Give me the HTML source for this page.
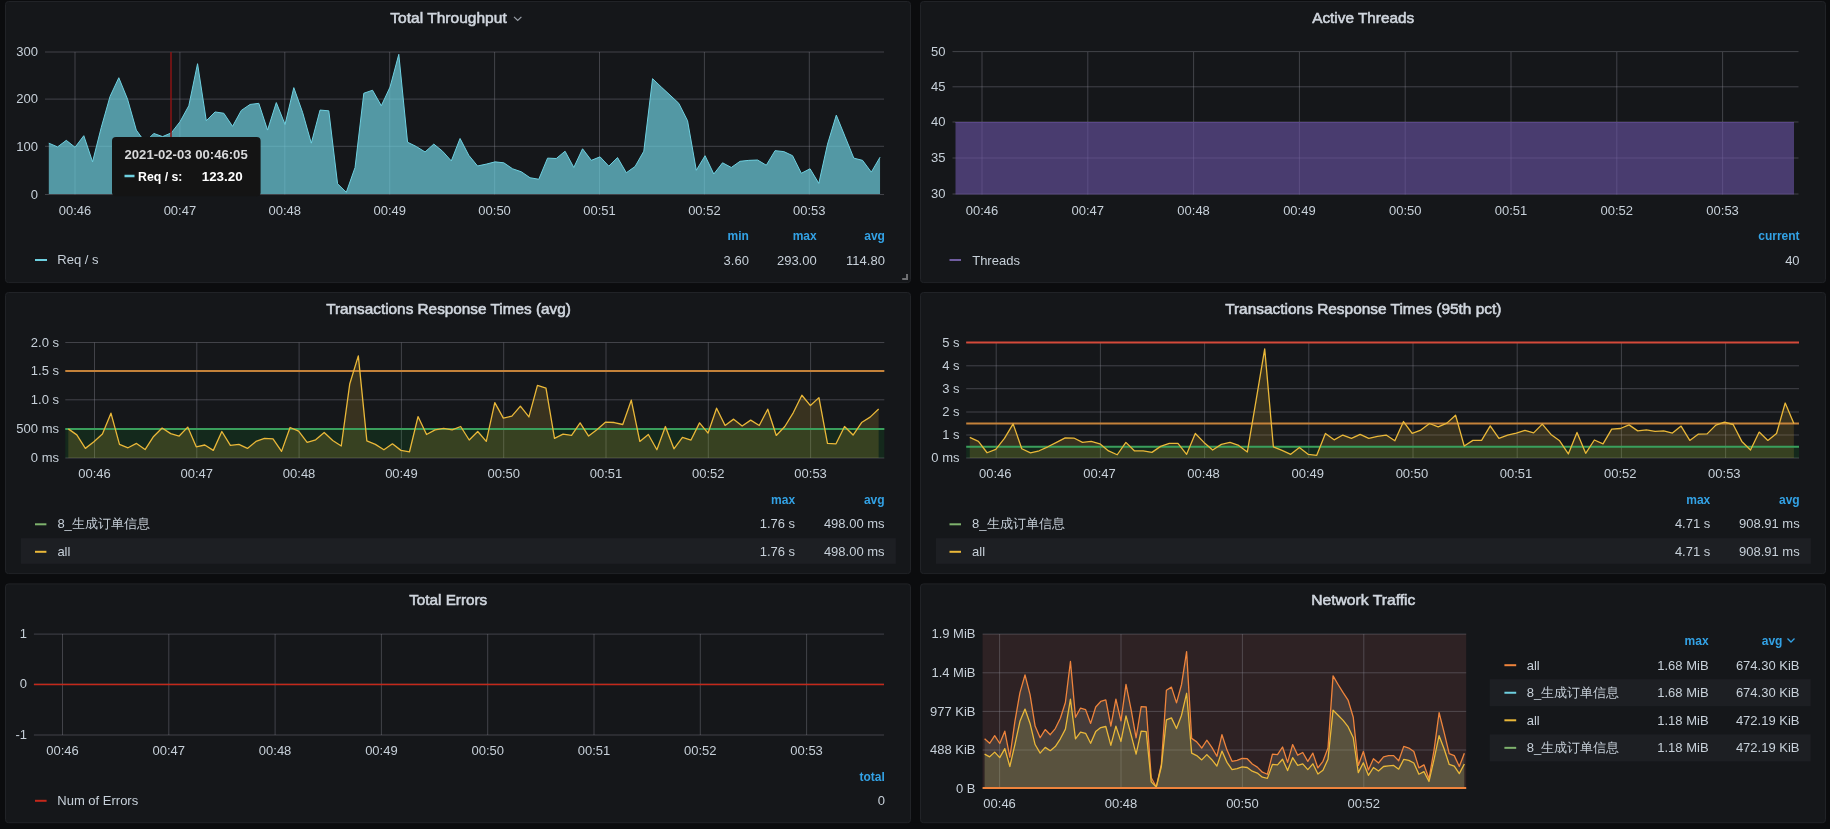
<!DOCTYPE html><html><head><meta charset="utf-8"><style>html,body{margin:0;padding:0;background:#0b0c0e;width:1830px;height:829px;overflow:hidden;position:relative}</style></head><body><svg width="1830" height="829" viewBox="0 0 1830 829" style="position:absolute;left:0;top:0;will-change:transform;font-family:'Liberation Sans',sans-serif">
<rect width="1830" height="829" fill="#0b0c0e"/>
<rect x="5.5" y="1.5" width="905" height="281.1" rx="3" fill="#15171a" stroke="#212327" stroke-width="1"/>
<rect x="920.5" y="1.5" width="905" height="281.1" rx="3" fill="#15171a" stroke="#212327" stroke-width="1"/>
<rect x="5.5" y="292.5" width="905" height="281.1" rx="3" fill="#15171a" stroke="#212327" stroke-width="1"/>
<rect x="920.5" y="292.5" width="905" height="281.1" rx="3" fill="#15171a" stroke="#212327" stroke-width="1"/>
<rect x="5.5" y="583.9" width="905" height="238.80000000000007" rx="3" fill="#15171a" stroke="#212327" stroke-width="1"/>
<rect x="920.5" y="583.9" width="905" height="238.80000000000007" rx="3" fill="#15171a" stroke="#212327" stroke-width="1"/>
<text x="448.5" y="22.8" font-size="14.8" text-anchor="middle" fill="#d0d6de" stroke="#d0d6de" stroke-width="0.55" textLength="116.4" lengthAdjust="spacingAndGlyphs">Total Throughput</text>
<path d="M514,16.8 L517.7,20.5 L521.4,16.8" fill="none" stroke="#9aa0a8" stroke-width="1.2"/>
<text x="1363.2" y="22.8" font-size="14.8" text-anchor="middle" fill="#d0d6de" stroke="#d0d6de" stroke-width="0.55" textLength="102" lengthAdjust="spacingAndGlyphs">Active Threads</text>
<text x="448.5" y="314" font-size="14.8" text-anchor="middle" fill="#d0d6de" stroke="#d0d6de" stroke-width="0.55" textLength="244.6" lengthAdjust="spacingAndGlyphs">Transactions Response Times (avg)</text>
<text x="1363.3" y="314" font-size="14.8" text-anchor="middle" fill="#d0d6de" stroke="#d0d6de" stroke-width="0.55" textLength="276.3" lengthAdjust="spacingAndGlyphs">Transactions Response Times (95th pct)</text>
<text x="448.2" y="604.9" font-size="14.8" text-anchor="middle" fill="#d0d6de" stroke="#d0d6de" stroke-width="0.55" textLength="78.1" lengthAdjust="spacingAndGlyphs">Total Errors</text>
<text x="1363.3" y="604.9" font-size="14.8" text-anchor="middle" fill="#d0d6de" stroke="#d0d6de" stroke-width="0.55" textLength="104.3" lengthAdjust="spacingAndGlyphs">Network Traffic</text>
<line x1="45" y1="52" x2="884" y2="52" stroke="rgba(140,140,150,0.38)" stroke-width="1"/>
<text x="38" y="56.2" font-size="13" text-anchor="end" fill="#c7d0d9" font-weight="normal">300</text>
<line x1="45" y1="99.1" x2="884" y2="99.1" stroke="rgba(140,140,150,0.38)" stroke-width="1"/>
<text x="38" y="103.3" font-size="13" text-anchor="end" fill="#c7d0d9" font-weight="normal">200</text>
<line x1="45" y1="146.3" x2="884" y2="146.3" stroke="rgba(140,140,150,0.38)" stroke-width="1"/>
<text x="38" y="150.5" font-size="13" text-anchor="end" fill="#c7d0d9" font-weight="normal">100</text>
<line x1="45" y1="194.5" x2="884" y2="194.5" stroke="rgba(140,140,150,0.38)" stroke-width="1"/>
<text x="38" y="198.7" font-size="13" text-anchor="end" fill="#c7d0d9" font-weight="normal">0</text>
<line x1="75.0" y1="52" x2="75.0" y2="194.5" stroke="rgba(140,140,150,0.38)" stroke-width="1"/>
<text x="75.0" y="214.6" font-size="13" text-anchor="middle" fill="#c7d0d9" font-weight="normal">00:46</text>
<line x1="179.9" y1="52" x2="179.9" y2="194.5" stroke="rgba(140,140,150,0.38)" stroke-width="1"/>
<text x="179.9" y="214.6" font-size="13" text-anchor="middle" fill="#c7d0d9" font-weight="normal">00:47</text>
<line x1="284.8" y1="52" x2="284.8" y2="194.5" stroke="rgba(140,140,150,0.38)" stroke-width="1"/>
<text x="284.8" y="214.6" font-size="13" text-anchor="middle" fill="#c7d0d9" font-weight="normal">00:48</text>
<line x1="389.70000000000005" y1="52" x2="389.70000000000005" y2="194.5" stroke="rgba(140,140,150,0.38)" stroke-width="1"/>
<text x="389.70000000000005" y="214.6" font-size="13" text-anchor="middle" fill="#c7d0d9" font-weight="normal">00:49</text>
<line x1="494.6" y1="52" x2="494.6" y2="194.5" stroke="rgba(140,140,150,0.38)" stroke-width="1"/>
<text x="494.6" y="214.6" font-size="13" text-anchor="middle" fill="#c7d0d9" font-weight="normal">00:50</text>
<line x1="599.5" y1="52" x2="599.5" y2="194.5" stroke="rgba(140,140,150,0.38)" stroke-width="1"/>
<text x="599.5" y="214.6" font-size="13" text-anchor="middle" fill="#c7d0d9" font-weight="normal">00:51</text>
<line x1="704.4000000000001" y1="52" x2="704.4000000000001" y2="194.5" stroke="rgba(140,140,150,0.38)" stroke-width="1"/>
<text x="704.4000000000001" y="214.6" font-size="13" text-anchor="middle" fill="#c7d0d9" font-weight="normal">00:52</text>
<line x1="809.3000000000001" y1="52" x2="809.3000000000001" y2="194.5" stroke="rgba(140,140,150,0.38)" stroke-width="1"/>
<text x="809.3000000000001" y="214.6" font-size="13" text-anchor="middle" fill="#c7d0d9" font-weight="normal">00:53</text>
<polygon points="48.80,194 48.80,143.17 57.55,146.91 66.30,140.36 75.05,147.28 83.80,135.69 92.55,161.87 101.30,127.27 110.05,96.42 118.80,77.72 127.55,99.23 136.30,130.08 145.05,142.23 153.80,133.44 162.55,136.62 171.30,132.88 180.05,121.66 188.80,105.77 197.55,63.70 206.30,120.73 215.05,111.94 223.80,113.25 232.55,126.34 241.30,110.45 250.05,104.46 258.80,103.34 267.55,130.08 276.30,102.59 285.05,124.47 293.80,87.63 302.55,112.31 311.30,143.17 320.05,110.07 328.80,110.82 337.55,183.74 346.30,192.34 355.05,167.48 363.80,93.24 372.55,90.25 381.30,105.77 390.05,87.07 398.80,54.35 407.55,142.23 416.30,146.53 425.05,151.96 433.80,144.10 442.55,151.21 451.30,160.93 460.05,138.49 468.80,155.32 477.55,165.98 486.30,164.11 495.05,161.87 503.80,162.80 512.55,168.78 521.30,171.78 530.05,177.76 538.80,179.26 547.55,158.13 556.30,158.50 565.05,151.21 573.80,167.48 582.55,148.78 591.30,160.37 600.05,156.82 608.80,166.17 617.55,157.57 626.30,172.71 635.05,166.54 643.80,151.21 652.55,78.66 661.30,87.07 670.05,95.11 678.80,103.34 687.55,120.73 696.30,170.28 705.05,155.70 713.80,174.02 722.55,162.80 731.30,167.48 740.05,161.31 748.80,160.37 757.55,160.00 766.30,165.23 775.05,150.65 783.80,151.58 792.55,155.70 801.30,173.27 810.05,168.78 818.80,183.37 827.55,144.10 836.30,115.12 845.05,136.62 853.80,158.13 862.55,160.37 871.30,172.15 880.05,157.19 880.05,194" fill="#6ed0e0" fill-opacity="0.7"/>
<polyline points="48.80,143.17 57.55,146.91 66.30,140.36 75.05,147.28 83.80,135.69 92.55,161.87 101.30,127.27 110.05,96.42 118.80,77.72 127.55,99.23 136.30,130.08 145.05,142.23 153.80,133.44 162.55,136.62 171.30,132.88 180.05,121.66 188.80,105.77 197.55,63.70 206.30,120.73 215.05,111.94 223.80,113.25 232.55,126.34 241.30,110.45 250.05,104.46 258.80,103.34 267.55,130.08 276.30,102.59 285.05,124.47 293.80,87.63 302.55,112.31 311.30,143.17 320.05,110.07 328.80,110.82 337.55,183.74 346.30,192.34 355.05,167.48 363.80,93.24 372.55,90.25 381.30,105.77 390.05,87.07 398.80,54.35 407.55,142.23 416.30,146.53 425.05,151.96 433.80,144.10 442.55,151.21 451.30,160.93 460.05,138.49 468.80,155.32 477.55,165.98 486.30,164.11 495.05,161.87 503.80,162.80 512.55,168.78 521.30,171.78 530.05,177.76 538.80,179.26 547.55,158.13 556.30,158.50 565.05,151.21 573.80,167.48 582.55,148.78 591.30,160.37 600.05,156.82 608.80,166.17 617.55,157.57 626.30,172.71 635.05,166.54 643.80,151.21 652.55,78.66 661.30,87.07 670.05,95.11 678.80,103.34 687.55,120.73 696.30,170.28 705.05,155.70 713.80,174.02 722.55,162.80 731.30,167.48 740.05,161.31 748.80,160.37 757.55,160.00 766.30,165.23 775.05,150.65 783.80,151.58 792.55,155.70 801.30,173.27 810.05,168.78 818.80,183.37 827.55,144.10 836.30,115.12 845.05,136.62 853.80,158.13 862.55,160.37 871.30,172.15 880.05,157.19" fill="none" stroke="#6ed0e0" stroke-width="1"/>
<line x1="171" y1="52" x2="171" y2="194" stroke="#8a1515" stroke-width="1.5"/>
<line x1="35" y1="260" x2="47" y2="260" stroke="#6ed0e0" stroke-width="2"/>
<text x="57.3" y="264.4" font-size="13" text-anchor="start" fill="#c7d0d9" font-weight="normal">Req / s</text>
<text x="748.9" y="240.1" font-size="12" text-anchor="end" fill="#33a2e5" font-weight="bold">min</text>
<text x="816.7" y="240.1" font-size="12" text-anchor="end" fill="#33a2e5" font-weight="bold">max</text>
<text x="884.9" y="240.1" font-size="12" text-anchor="end" fill="#33a2e5" font-weight="bold">avg</text>
<text x="748.9" y="264.6" font-size="13" text-anchor="end" fill="#c7d0d9" font-weight="normal">3.60</text>
<text x="816.7" y="264.6" font-size="13" text-anchor="end" fill="#c7d0d9" font-weight="normal">293.00</text>
<text x="884.9" y="264.6" font-size="13" text-anchor="end" fill="#c7d0d9" font-weight="normal">114.80</text>
<path d="M902.2,279 H907 V274" fill="none" stroke="#6e6f72" stroke-width="2"/>
<rect x="112" y="137" width="148.6" height="59.3" rx="4" fill="#141414"/>
<text x="124.5" y="159.2" font-size="13" text-anchor="start" fill="#d8d9da" font-weight="bold" textLength="123.2" lengthAdjust="spacingAndGlyphs">2021-02-03 00:46:05</text>
<line x1="124.5" y1="176" x2="134.5" y2="176" stroke="#6ed0e0" stroke-width="2.5"/>
<text x="138" y="181.4" font-size="12.5" text-anchor="start" fill="#ffffff" font-weight="bold" textLength="44.4" lengthAdjust="spacingAndGlyphs">Req / s:</text>
<text x="242.7" y="181.4" font-size="13" text-anchor="end" fill="#ffffff" font-weight="bold" textLength="41" lengthAdjust="spacingAndGlyphs">123.20</text>
<line x1="952.5" y1="51.6" x2="1798.5" y2="51.6" stroke="rgba(140,140,150,0.38)" stroke-width="1"/>
<text x="945.5" y="55.800000000000004" font-size="13" text-anchor="end" fill="#c7d0d9" font-weight="normal">50</text>
<line x1="952.5" y1="86.8" x2="1798.5" y2="86.8" stroke="rgba(140,140,150,0.38)" stroke-width="1"/>
<text x="945.5" y="91.0" font-size="13" text-anchor="end" fill="#c7d0d9" font-weight="normal">45</text>
<line x1="952.5" y1="122" x2="1798.5" y2="122" stroke="rgba(140,140,150,0.38)" stroke-width="1"/>
<text x="945.5" y="126.2" font-size="13" text-anchor="end" fill="#c7d0d9" font-weight="normal">40</text>
<line x1="952.5" y1="158" x2="1798.5" y2="158" stroke="rgba(140,140,150,0.38)" stroke-width="1"/>
<text x="945.5" y="162.2" font-size="13" text-anchor="end" fill="#c7d0d9" font-weight="normal">35</text>
<line x1="952.5" y1="194" x2="1798.5" y2="194" stroke="rgba(140,140,150,0.38)" stroke-width="1"/>
<text x="945.5" y="198.2" font-size="13" text-anchor="end" fill="#c7d0d9" font-weight="normal">30</text>
<line x1="982.0" y1="52" x2="982.0" y2="194.5" stroke="rgba(140,140,150,0.38)" stroke-width="1"/>
<text x="982.0" y="214.6" font-size="13" text-anchor="middle" fill="#c7d0d9" font-weight="normal">00:46</text>
<line x1="1087.8" y1="52" x2="1087.8" y2="194.5" stroke="rgba(140,140,150,0.38)" stroke-width="1"/>
<text x="1087.8" y="214.6" font-size="13" text-anchor="middle" fill="#c7d0d9" font-weight="normal">00:47</text>
<line x1="1193.6" y1="52" x2="1193.6" y2="194.5" stroke="rgba(140,140,150,0.38)" stroke-width="1"/>
<text x="1193.6" y="214.6" font-size="13" text-anchor="middle" fill="#c7d0d9" font-weight="normal">00:48</text>
<line x1="1299.4" y1="52" x2="1299.4" y2="194.5" stroke="rgba(140,140,150,0.38)" stroke-width="1"/>
<text x="1299.4" y="214.6" font-size="13" text-anchor="middle" fill="#c7d0d9" font-weight="normal">00:49</text>
<line x1="1405.2" y1="52" x2="1405.2" y2="194.5" stroke="rgba(140,140,150,0.38)" stroke-width="1"/>
<text x="1405.2" y="214.6" font-size="13" text-anchor="middle" fill="#c7d0d9" font-weight="normal">00:50</text>
<line x1="1511.0" y1="52" x2="1511.0" y2="194.5" stroke="rgba(140,140,150,0.38)" stroke-width="1"/>
<text x="1511.0" y="214.6" font-size="13" text-anchor="middle" fill="#c7d0d9" font-weight="normal">00:51</text>
<line x1="1616.8" y1="52" x2="1616.8" y2="194.5" stroke="rgba(140,140,150,0.38)" stroke-width="1"/>
<text x="1616.8" y="214.6" font-size="13" text-anchor="middle" fill="#c7d0d9" font-weight="normal">00:52</text>
<line x1="1722.6" y1="52" x2="1722.6" y2="194.5" stroke="rgba(140,140,150,0.38)" stroke-width="1"/>
<text x="1722.6" y="214.6" font-size="13" text-anchor="middle" fill="#c7d0d9" font-weight="normal">00:53</text>
<rect x="955.5" y="122" width="838.5" height="72.5" fill="#6c55a8" fill-opacity="0.6"/>
<line x1="955.5" y1="122.5" x2="1794" y2="122.5" stroke="#5a4888" stroke-width="1"/>
<line x1="949.5" y1="260" x2="961" y2="260" stroke="#705da0" stroke-width="2"/>
<text x="972.2" y="264.8" font-size="13" text-anchor="start" fill="#c7d0d9" font-weight="normal">Threads</text>
<text x="1799.6" y="240.1" font-size="12" text-anchor="end" fill="#33a2e5" font-weight="bold">current</text>
<text x="1799.6" y="264.6" font-size="13" text-anchor="end" fill="#c7d0d9" font-weight="normal">40</text>
<line x1="65.3" y1="342.5" x2="884.3" y2="342.5" stroke="rgba(140,140,150,0.38)" stroke-width="1"/>
<text x="59" y="346.7" font-size="13" text-anchor="end" fill="#c7d0d9" font-weight="normal">2.0 s</text>
<line x1="65.3" y1="370.8" x2="884.3" y2="370.8" stroke="rgba(140,140,150,0.38)" stroke-width="1"/>
<text x="59" y="375.0" font-size="13" text-anchor="end" fill="#c7d0d9" font-weight="normal">1.5 s</text>
<line x1="65.3" y1="399.8" x2="884.3" y2="399.8" stroke="rgba(140,140,150,0.38)" stroke-width="1"/>
<text x="59" y="404.0" font-size="13" text-anchor="end" fill="#c7d0d9" font-weight="normal">1.0 s</text>
<line x1="65.3" y1="428.9" x2="884.3" y2="428.9" stroke="rgba(140,140,150,0.38)" stroke-width="1"/>
<text x="59" y="433.09999999999997" font-size="13" text-anchor="end" fill="#c7d0d9" font-weight="normal">500 ms</text>
<line x1="65.3" y1="458" x2="884.3" y2="458" stroke="rgba(140,140,150,0.38)" stroke-width="1"/>
<text x="59" y="462.2" font-size="13" text-anchor="end" fill="#c7d0d9" font-weight="normal">0 ms</text>
<line x1="94.5" y1="342.5" x2="94.5" y2="458" stroke="rgba(140,140,150,0.38)" stroke-width="1"/>
<text x="94.5" y="477.7" font-size="13" text-anchor="middle" fill="#c7d0d9" font-weight="normal">00:46</text>
<line x1="196.8" y1="342.5" x2="196.8" y2="458" stroke="rgba(140,140,150,0.38)" stroke-width="1"/>
<text x="196.8" y="477.7" font-size="13" text-anchor="middle" fill="#c7d0d9" font-weight="normal">00:47</text>
<line x1="299.1" y1="342.5" x2="299.1" y2="458" stroke="rgba(140,140,150,0.38)" stroke-width="1"/>
<text x="299.1" y="477.7" font-size="13" text-anchor="middle" fill="#c7d0d9" font-weight="normal">00:48</text>
<line x1="401.4" y1="342.5" x2="401.4" y2="458" stroke="rgba(140,140,150,0.38)" stroke-width="1"/>
<text x="401.4" y="477.7" font-size="13" text-anchor="middle" fill="#c7d0d9" font-weight="normal">00:49</text>
<line x1="503.7" y1="342.5" x2="503.7" y2="458" stroke="rgba(140,140,150,0.38)" stroke-width="1"/>
<text x="503.7" y="477.7" font-size="13" text-anchor="middle" fill="#c7d0d9" font-weight="normal">00:50</text>
<line x1="606.0" y1="342.5" x2="606.0" y2="458" stroke="rgba(140,140,150,0.38)" stroke-width="1"/>
<text x="606.0" y="477.7" font-size="13" text-anchor="middle" fill="#c7d0d9" font-weight="normal">00:51</text>
<line x1="708.3" y1="342.5" x2="708.3" y2="458" stroke="rgba(140,140,150,0.38)" stroke-width="1"/>
<text x="708.3" y="477.7" font-size="13" text-anchor="middle" fill="#c7d0d9" font-weight="normal">00:52</text>
<line x1="810.6" y1="342.5" x2="810.6" y2="458" stroke="rgba(140,140,150,0.38)" stroke-width="1"/>
<text x="810.6" y="477.7" font-size="13" text-anchor="middle" fill="#c7d0d9" font-weight="normal">00:53</text>
<rect x="65.3" y="429" width="819.0" height="29" fill="#0bed32" fill-opacity="0.09"/>
<polygon points="68.30,458 68.30,428.88 76.83,434.85 85.36,448.38 93.89,441.82 102.42,434.05 110.95,413.16 119.48,444.40 128.01,447.79 136.54,443.41 145.07,449.58 153.60,436.44 162.13,428.08 170.66,433.66 179.19,436.04 187.72,427.09 196.25,446.79 204.78,445.00 213.31,450.37 221.84,431.47 230.37,445.40 238.90,444.40 247.43,448.38 255.96,441.42 264.49,438.43 273.02,438.83 281.55,451.37 290.08,427.49 298.61,431.07 307.14,442.41 315.67,439.83 324.20,432.46 332.73,440.42 341.26,446.00 349.79,383.71 358.32,355.85 366.85,440.82 375.38,444.40 383.91,449.78 392.44,443.81 400.97,450.37 409.50,451.77 418.03,416.54 426.56,434.45 435.09,429.88 443.62,428.48 452.15,429.88 460.68,426.49 469.21,440.02 477.74,431.47 486.27,441.42 494.80,402.61 503.33,418.13 511.86,416.14 520.39,406.19 528.92,416.94 537.45,385.30 545.98,388.08 554.51,438.43 563.04,434.05 571.57,435.45 580.10,422.91 588.63,436.04 597.16,429.48 605.69,422.11 614.22,422.51 622.75,424.50 631.28,400.22 639.81,441.42 648.34,434.45 656.87,449.78 665.40,426.49 673.93,448.78 682.46,437.44 690.99,440.02 699.52,422.91 708.05,433.06 716.58,408.18 725.11,425.50 733.64,419.13 742.17,426.09 750.70,420.12 759.23,425.50 767.76,409.18 776.29,435.45 784.82,426.49 793.35,412.56 801.88,395.25 810.41,405.60 818.94,397.64 827.47,443.41 836.00,443.81 844.53,426.49 853.06,435.05 861.59,422.51 870.12,417.14 878.65,408.98 878.65,458" fill="#eab839" fill-opacity="0.17"/>
<line x1="65.3" y1="429" x2="884.3" y2="429" stroke="#3a9f5c" stroke-width="2"/>
<line x1="65.3" y1="371" x2="884.3" y2="371" stroke="#c4823a" stroke-width="2"/>
<polyline points="68.30,428.88 76.83,434.85 85.36,448.38 93.89,441.82 102.42,434.05 110.95,413.16 119.48,444.40 128.01,447.79 136.54,443.41 145.07,449.58 153.60,436.44 162.13,428.08 170.66,433.66 179.19,436.04 187.72,427.09 196.25,446.79 204.78,445.00 213.31,450.37 221.84,431.47 230.37,445.40 238.90,444.40 247.43,448.38 255.96,441.42 264.49,438.43 273.02,438.83 281.55,451.37 290.08,427.49 298.61,431.07 307.14,442.41 315.67,439.83 324.20,432.46 332.73,440.42 341.26,446.00 349.79,383.71 358.32,355.85 366.85,440.82 375.38,444.40 383.91,449.78 392.44,443.81 400.97,450.37 409.50,451.77 418.03,416.54 426.56,434.45 435.09,429.88 443.62,428.48 452.15,429.88 460.68,426.49 469.21,440.02 477.74,431.47 486.27,441.42 494.80,402.61 503.33,418.13 511.86,416.14 520.39,406.19 528.92,416.94 537.45,385.30 545.98,388.08 554.51,438.43 563.04,434.05 571.57,435.45 580.10,422.91 588.63,436.04 597.16,429.48 605.69,422.11 614.22,422.51 622.75,424.50 631.28,400.22 639.81,441.42 648.34,434.45 656.87,449.78 665.40,426.49 673.93,448.78 682.46,437.44 690.99,440.02 699.52,422.91 708.05,433.06 716.58,408.18 725.11,425.50 733.64,419.13 742.17,426.09 750.70,420.12 759.23,425.50 767.76,409.18 776.29,435.45 784.82,426.49 793.35,412.56 801.88,395.25 810.41,405.60 818.94,397.64 827.47,443.41 836.00,443.81 844.53,426.49 853.06,435.05 861.59,422.51 870.12,417.14 878.65,408.98" fill="none" stroke="#eab839" stroke-width="1.3" stroke-linejoin="round"/>
<text x="795.1" y="503.7" font-size="12" text-anchor="end" fill="#33a2e5" font-weight="bold">max</text>
<text x="884.6" y="503.7" font-size="12" text-anchor="end" fill="#33a2e5" font-weight="bold">avg</text>
<rect x="20.8" y="538.2" width="875" height="25.6" fill="#1d1f23"/>
<line x1="35" y1="524.3" x2="46.4" y2="524.3" stroke="#7eb26d" stroke-width="2"/>
<text x="57.4" y="528.2" font-size="13" text-anchor="start" fill="#c7d0d9" font-weight="normal">8_生成订单信息</text>
<text x="795.1" y="528.4" font-size="13" text-anchor="end" fill="#c7d0d9" font-weight="normal">1.76 s</text>
<text x="884.6" y="528.4" font-size="13" text-anchor="end" fill="#c7d0d9" font-weight="normal">498.00 ms</text>
<line x1="35" y1="551.8" x2="46.4" y2="551.8" stroke="#eab839" stroke-width="2"/>
<text x="57.4" y="555.8" font-size="13" text-anchor="start" fill="#c7d0d9" font-weight="normal">all</text>
<text x="795.1" y="555.7" font-size="13" text-anchor="end" fill="#c7d0d9" font-weight="normal">1.76 s</text>
<text x="884.6" y="555.7" font-size="13" text-anchor="end" fill="#c7d0d9" font-weight="normal">498.00 ms</text>
<line x1="966.2" y1="342.5" x2="1799" y2="342.5" stroke="rgba(140,140,150,0.38)" stroke-width="1"/>
<text x="959.5" y="346.7" font-size="13" text-anchor="end" fill="#c7d0d9" font-weight="normal">5 s</text>
<line x1="966.2" y1="365.8" x2="1799" y2="365.8" stroke="rgba(140,140,150,0.38)" stroke-width="1"/>
<text x="959.5" y="370.0" font-size="13" text-anchor="end" fill="#c7d0d9" font-weight="normal">4 s</text>
<line x1="966.2" y1="388.7" x2="1799" y2="388.7" stroke="rgba(140,140,150,0.38)" stroke-width="1"/>
<text x="959.5" y="392.9" font-size="13" text-anchor="end" fill="#c7d0d9" font-weight="normal">3 s</text>
<line x1="966.2" y1="412" x2="1799" y2="412" stroke="rgba(140,140,150,0.38)" stroke-width="1"/>
<text x="959.5" y="416.2" font-size="13" text-anchor="end" fill="#c7d0d9" font-weight="normal">2 s</text>
<line x1="966.2" y1="435" x2="1799" y2="435" stroke="rgba(140,140,150,0.38)" stroke-width="1"/>
<text x="959.5" y="439.2" font-size="13" text-anchor="end" fill="#c7d0d9" font-weight="normal">1 s</text>
<line x1="966.2" y1="458" x2="1799" y2="458" stroke="rgba(140,140,150,0.38)" stroke-width="1"/>
<text x="959.5" y="462.2" font-size="13" text-anchor="end" fill="#c7d0d9" font-weight="normal">0 ms</text>
<line x1="996.2" y1="342.5" x2="996.2" y2="458" stroke="rgba(140,140,150,0.38)" stroke-width="1"/>
<text x="995.3" y="477.7" font-size="13" text-anchor="middle" fill="#c7d0d9" font-weight="normal">00:46</text>
<line x1="1100.4" y1="342.5" x2="1100.4" y2="458" stroke="rgba(140,140,150,0.38)" stroke-width="1"/>
<text x="1099.45" y="477.7" font-size="13" text-anchor="middle" fill="#c7d0d9" font-weight="normal">00:47</text>
<line x1="1204.6000000000001" y1="342.5" x2="1204.6000000000001" y2="458" stroke="rgba(140,140,150,0.38)" stroke-width="1"/>
<text x="1203.6" y="477.7" font-size="13" text-anchor="middle" fill="#c7d0d9" font-weight="normal">00:48</text>
<line x1="1308.8000000000002" y1="342.5" x2="1308.8000000000002" y2="458" stroke="rgba(140,140,150,0.38)" stroke-width="1"/>
<text x="1307.75" y="477.7" font-size="13" text-anchor="middle" fill="#c7d0d9" font-weight="normal">00:49</text>
<line x1="1413.0" y1="342.5" x2="1413.0" y2="458" stroke="rgba(140,140,150,0.38)" stroke-width="1"/>
<text x="1411.9" y="477.7" font-size="13" text-anchor="middle" fill="#c7d0d9" font-weight="normal">00:50</text>
<line x1="1517.2" y1="342.5" x2="1517.2" y2="458" stroke="rgba(140,140,150,0.38)" stroke-width="1"/>
<text x="1516.05" y="477.7" font-size="13" text-anchor="middle" fill="#c7d0d9" font-weight="normal">00:51</text>
<line x1="1621.4" y1="342.5" x2="1621.4" y2="458" stroke="rgba(140,140,150,0.38)" stroke-width="1"/>
<text x="1620.2" y="477.7" font-size="13" text-anchor="middle" fill="#c7d0d9" font-weight="normal">00:52</text>
<line x1="1725.6" y1="342.5" x2="1725.6" y2="458" stroke="rgba(140,140,150,0.38)" stroke-width="1"/>
<text x="1724.35" y="477.7" font-size="13" text-anchor="middle" fill="#c7d0d9" font-weight="normal">00:53</text>
<rect x="966.2" y="446.8" width="832.8" height="11.2" fill="#0bed32" fill-opacity="0.09"/>
<polygon points="969.75,458 969.75,437.44 978.42,441.42 987.10,452.76 995.77,449.38 1004.45,438.43 1013.12,423.91 1021.80,448.78 1030.47,452.96 1039.15,450.77 1047.83,446.79 1056.50,442.41 1065.17,437.84 1073.85,438.03 1082.53,442.41 1091.20,441.42 1099.88,443.81 1108.55,450.97 1117.22,454.75 1125.90,442.41 1134.58,450.97 1143.25,450.97 1151.92,452.36 1160.60,446.39 1169.28,443.41 1177.95,443.41 1186.62,454.35 1195.30,433.46 1203.97,442.41 1212.65,449.98 1221.33,444.40 1230.00,442.41 1238.67,445.40 1247.35,451.97 1256.03,400.62 1264.70,348.88 1273.38,446.79 1282.05,450.37 1290.72,454.35 1299.40,447.39 1308.08,454.35 1316.75,455.35 1325.42,433.46 1334.10,439.83 1342.78,435.05 1351.45,438.43 1360.12,434.45 1368.80,438.43 1377.47,436.44 1386.15,435.05 1394.83,440.82 1403.50,421.52 1412.17,433.46 1420.85,430.07 1429.53,423.51 1438.20,426.89 1446.88,423.11 1455.55,415.15 1464.22,446.00 1472.90,440.42 1481.58,440.42 1490.25,425.90 1498.93,438.43 1507.60,435.05 1516.28,433.06 1524.95,430.47 1533.62,432.86 1542.30,424.10 1550.97,434.45 1559.65,440.82 1568.33,453.96 1577.00,432.46 1585.68,453.36 1594.35,440.02 1603.03,443.81 1611.70,429.08 1620.38,428.48 1629.05,424.90 1637.72,430.87 1646.40,429.88 1655.08,431.47 1663.75,430.87 1672.43,433.06 1681.10,426.09 1689.78,440.42 1698.45,434.05 1707.12,433.86 1715.80,425.10 1724.47,422.11 1733.15,424.50 1741.83,441.42 1750.50,449.98 1759.18,432.06 1767.85,440.42 1776.53,433.46 1785.20,403.01 1793.88,423.51 1793.88,458" fill="#eab839" fill-opacity="0.17"/>
<line x1="966.2" y1="446.8" x2="1799" y2="446.8" stroke="#3a9f5c" stroke-width="2"/>
<line x1="966.2" y1="423.5" x2="1799" y2="423.5" stroke="#c4823a" stroke-width="2"/>
<line x1="966.2" y1="342.5" x2="1799" y2="342.5" stroke="#d44a3a" stroke-width="2"/>
<polyline points="969.75,437.44 978.42,441.42 987.10,452.76 995.77,449.38 1004.45,438.43 1013.12,423.91 1021.80,448.78 1030.47,452.96 1039.15,450.77 1047.83,446.79 1056.50,442.41 1065.17,437.84 1073.85,438.03 1082.53,442.41 1091.20,441.42 1099.88,443.81 1108.55,450.97 1117.22,454.75 1125.90,442.41 1134.58,450.97 1143.25,450.97 1151.92,452.36 1160.60,446.39 1169.28,443.41 1177.95,443.41 1186.62,454.35 1195.30,433.46 1203.97,442.41 1212.65,449.98 1221.33,444.40 1230.00,442.41 1238.67,445.40 1247.35,451.97 1256.03,400.62 1264.70,348.88 1273.38,446.79 1282.05,450.37 1290.72,454.35 1299.40,447.39 1308.08,454.35 1316.75,455.35 1325.42,433.46 1334.10,439.83 1342.78,435.05 1351.45,438.43 1360.12,434.45 1368.80,438.43 1377.47,436.44 1386.15,435.05 1394.83,440.82 1403.50,421.52 1412.17,433.46 1420.85,430.07 1429.53,423.51 1438.20,426.89 1446.88,423.11 1455.55,415.15 1464.22,446.00 1472.90,440.42 1481.58,440.42 1490.25,425.90 1498.93,438.43 1507.60,435.05 1516.28,433.06 1524.95,430.47 1533.62,432.86 1542.30,424.10 1550.97,434.45 1559.65,440.82 1568.33,453.96 1577.00,432.46 1585.68,453.36 1594.35,440.02 1603.03,443.81 1611.70,429.08 1620.38,428.48 1629.05,424.90 1637.72,430.87 1646.40,429.88 1655.08,431.47 1663.75,430.87 1672.43,433.06 1681.10,426.09 1689.78,440.42 1698.45,434.05 1707.12,433.86 1715.80,425.10 1724.47,422.11 1733.15,424.50 1741.83,441.42 1750.50,449.98 1759.18,432.06 1767.85,440.42 1776.53,433.46 1785.20,403.01 1793.88,423.51" fill="none" stroke="#eab839" stroke-width="1.3" stroke-linejoin="round"/>
<text x="1710.3" y="503.7" font-size="12" text-anchor="end" fill="#33a2e5" font-weight="bold">max</text>
<text x="1799.7" y="503.7" font-size="12" text-anchor="end" fill="#33a2e5" font-weight="bold">avg</text>
<rect x="935.9" y="538.2" width="875" height="25.6" fill="#1d1f23"/>
<line x1="949.5" y1="524.3" x2="961" y2="524.3" stroke="#7eb26d" stroke-width="2"/>
<text x="972.1" y="528.2" font-size="13" text-anchor="start" fill="#c7d0d9" font-weight="normal">8_生成订单信息</text>
<text x="1710.3" y="528.4" font-size="13" text-anchor="end" fill="#c7d0d9" font-weight="normal">4.71 s</text>
<text x="1799.7" y="528.4" font-size="13" text-anchor="end" fill="#c7d0d9" font-weight="normal">908.91 ms</text>
<line x1="949.5" y1="551.8" x2="961" y2="551.8" stroke="#eab839" stroke-width="2"/>
<text x="972.1" y="555.8" font-size="13" text-anchor="start" fill="#c7d0d9" font-weight="normal">all</text>
<text x="1710.3" y="555.7" font-size="13" text-anchor="end" fill="#c7d0d9" font-weight="normal">4.71 s</text>
<text x="1799.7" y="555.7" font-size="13" text-anchor="end" fill="#c7d0d9" font-weight="normal">908.91 ms</text>
<line x1="33.9" y1="634.1" x2="884" y2="634.1" stroke="rgba(140,140,150,0.38)" stroke-width="1"/>
<text x="27" y="638.3000000000001" font-size="13" text-anchor="end" fill="#c7d0d9" font-weight="normal">1</text>
<line x1="33.9" y1="684.2" x2="884" y2="684.2" stroke="rgba(140,140,150,0.38)" stroke-width="1"/>
<text x="27" y="688.4000000000001" font-size="13" text-anchor="end" fill="#c7d0d9" font-weight="normal">0</text>
<line x1="33.9" y1="735" x2="884" y2="735" stroke="rgba(140,140,150,0.38)" stroke-width="1"/>
<text x="27" y="739.2" font-size="13" text-anchor="end" fill="#c7d0d9" font-weight="normal">-1</text>
<line x1="62.5" y1="634" x2="62.5" y2="735" stroke="rgba(140,140,150,0.38)" stroke-width="1"/>
<text x="62.5" y="754.9" font-size="13" text-anchor="middle" fill="#c7d0d9" font-weight="normal">00:46</text>
<line x1="168.8" y1="634" x2="168.8" y2="735" stroke="rgba(140,140,150,0.38)" stroke-width="1"/>
<text x="168.8" y="754.9" font-size="13" text-anchor="middle" fill="#c7d0d9" font-weight="normal">00:47</text>
<line x1="275.1" y1="634" x2="275.1" y2="735" stroke="rgba(140,140,150,0.38)" stroke-width="1"/>
<text x="275.1" y="754.9" font-size="13" text-anchor="middle" fill="#c7d0d9" font-weight="normal">00:48</text>
<line x1="381.4" y1="634" x2="381.4" y2="735" stroke="rgba(140,140,150,0.38)" stroke-width="1"/>
<text x="381.4" y="754.9" font-size="13" text-anchor="middle" fill="#c7d0d9" font-weight="normal">00:49</text>
<line x1="487.7" y1="634" x2="487.7" y2="735" stroke="rgba(140,140,150,0.38)" stroke-width="1"/>
<text x="487.7" y="754.9" font-size="13" text-anchor="middle" fill="#c7d0d9" font-weight="normal">00:50</text>
<line x1="594.0" y1="634" x2="594.0" y2="735" stroke="rgba(140,140,150,0.38)" stroke-width="1"/>
<text x="594.0" y="754.9" font-size="13" text-anchor="middle" fill="#c7d0d9" font-weight="normal">00:51</text>
<line x1="700.3" y1="634" x2="700.3" y2="735" stroke="rgba(140,140,150,0.38)" stroke-width="1"/>
<text x="700.3" y="754.9" font-size="13" text-anchor="middle" fill="#c7d0d9" font-weight="normal">00:52</text>
<line x1="806.6" y1="634" x2="806.6" y2="735" stroke="rgba(140,140,150,0.38)" stroke-width="1"/>
<text x="806.6" y="754.9" font-size="13" text-anchor="middle" fill="#c7d0d9" font-weight="normal">00:53</text>
<line x1="33.9" y1="684.5" x2="884" y2="684.5" stroke="#c4281b" stroke-width="1.5"/>
<line x1="35" y1="800.8" x2="46.6" y2="800.8" stroke="#c4281b" stroke-width="2"/>
<text x="57.3" y="805" font-size="13" text-anchor="start" fill="#c7d0d9" font-weight="normal">Num of Errors</text>
<text x="884.9" y="780.5" font-size="12" text-anchor="end" fill="#33a2e5" font-weight="bold">total</text>
<text x="884.9" y="804.9" font-size="13" text-anchor="end" fill="#c7d0d9" font-weight="normal">0</text>
<rect x="982.6" y="634" width="483.6" height="154.4" fill="#ea7070" fill-opacity="0.12"/>
<line x1="982.6" y1="634.1" x2="1466.2" y2="634.1" stroke="rgba(140,140,150,0.38)" stroke-width="1"/>
<text x="975.5" y="638.3000000000001" font-size="13" text-anchor="end" fill="#c7d0d9" font-weight="normal">1.9 MiB</text>
<line x1="982.6" y1="672.8" x2="1466.2" y2="672.8" stroke="rgba(140,140,150,0.38)" stroke-width="1"/>
<text x="975.5" y="677.0" font-size="13" text-anchor="end" fill="#c7d0d9" font-weight="normal">1.4 MiB</text>
<line x1="982.6" y1="711.4" x2="1466.2" y2="711.4" stroke="rgba(140,140,150,0.38)" stroke-width="1"/>
<text x="975.5" y="715.6" font-size="13" text-anchor="end" fill="#c7d0d9" font-weight="normal">977 KiB</text>
<line x1="982.6" y1="750" x2="1466.2" y2="750" stroke="rgba(140,140,150,0.38)" stroke-width="1"/>
<text x="975.5" y="754.2" font-size="13" text-anchor="end" fill="#c7d0d9" font-weight="normal">488 KiB</text>
<line x1="982.6" y1="788.4" x2="1466.2" y2="788.4" stroke="rgba(140,140,150,0.38)" stroke-width="1"/>
<text x="975.5" y="792.6" font-size="13" text-anchor="end" fill="#c7d0d9" font-weight="normal">0 B</text>
<line x1="999.6" y1="634" x2="999.6" y2="788" stroke="rgba(140,140,150,0.38)" stroke-width="1"/>
<text x="999.6" y="808.4" font-size="13" text-anchor="middle" fill="#c7d0d9" font-weight="normal">00:46</text>
<line x1="1121.0" y1="634" x2="1121.0" y2="788" stroke="rgba(140,140,150,0.38)" stroke-width="1"/>
<text x="1121.0" y="808.4" font-size="13" text-anchor="middle" fill="#c7d0d9" font-weight="normal">00:48</text>
<line x1="1242.4" y1="634" x2="1242.4" y2="788" stroke="rgba(140,140,150,0.38)" stroke-width="1"/>
<text x="1242.4" y="808.4" font-size="13" text-anchor="middle" fill="#c7d0d9" font-weight="normal">00:50</text>
<line x1="1363.8000000000002" y1="634" x2="1363.8000000000002" y2="788" stroke="rgba(140,140,150,0.38)" stroke-width="1"/>
<text x="1363.8000000000002" y="808.4" font-size="13" text-anchor="middle" fill="#c7d0d9" font-weight="normal">00:52</text>
<polygon points="984.60,788 984.60,738.80 989.65,743.31 994.70,735.72 999.75,743.52 1004.80,731.21 1009.85,757.25 1014.90,721.37 1019.95,692.66 1025.00,674.83 1030.05,694.71 1035.10,726.09 1040.15,737.77 1045.20,729.57 1050.25,734.70 1055.30,728.55 1060.35,718.30 1065.40,702.51 1070.45,661.50 1075.50,717.27 1080.55,708.04 1085.60,709.68 1090.65,723.42 1095.70,707.02 1100.75,701.48 1105.80,699.84 1110.85,726.09 1115.90,699.23 1120.95,720.96 1126.00,684.46 1131.05,709.48 1136.10,737.77 1141.15,706.61 1146.20,707.02 1151.25,777.76 1156.30,786.98 1161.35,764.43 1166.40,690.20 1171.45,687.13 1176.50,702.92 1181.55,684.46 1186.60,651.66 1191.65,738.39 1196.70,741.88 1201.75,748.03 1206.80,740.23 1211.85,747.41 1216.90,756.23 1221.95,734.70 1227.00,750.08 1232.05,761.35 1237.10,760.33 1242.15,758.28 1247.20,758.69 1252.25,764.02 1257.30,767.10 1262.35,772.22 1267.40,774.27 1272.45,754.18 1277.50,754.59 1282.55,747.00 1287.60,762.38 1292.65,744.54 1297.70,755.20 1302.75,752.54 1307.80,761.35 1312.85,753.15 1317.90,767.92 1322.95,761.35 1328.00,748.03 1333.05,675.85 1338.10,684.46 1343.15,692.66 1348.20,700.46 1353.25,717.27 1358.30,765.46 1363.35,751.51 1368.40,769.97 1373.45,758.69 1378.50,762.99 1383.55,756.84 1388.60,755.61 1393.65,755.61 1398.70,760.74 1403.75,746.39 1408.80,748.03 1413.85,751.51 1418.90,767.92 1423.95,764.84 1429.00,778.78 1434.05,750.08 1439.10,712.76 1444.15,732.65 1449.20,753.56 1454.25,755.61 1459.30,766.48 1464.35,753.15 1464.35,788" fill="#ef843c" fill-opacity="0.1"/>
<polygon points="984.60,788 984.60,738.80 989.65,743.31 994.70,735.72 999.75,743.52 1004.80,731.21 1009.85,757.25 1014.90,721.37 1019.95,692.66 1025.00,674.83 1030.05,694.71 1035.10,726.09 1040.15,737.77 1045.20,729.57 1050.25,734.70 1055.30,728.55 1060.35,718.30 1065.40,702.51 1070.45,661.50 1075.50,717.27 1080.55,708.04 1085.60,709.68 1090.65,723.42 1095.70,707.02 1100.75,701.48 1105.80,699.84 1110.85,726.09 1115.90,699.23 1120.95,720.96 1126.00,684.46 1131.05,709.48 1136.10,737.77 1141.15,706.61 1146.20,707.02 1151.25,777.76 1156.30,786.98 1161.35,764.43 1166.40,690.20 1171.45,687.13 1176.50,702.92 1181.55,684.46 1186.60,651.66 1191.65,738.39 1196.70,741.88 1201.75,748.03 1206.80,740.23 1211.85,747.41 1216.90,756.23 1221.95,734.70 1227.00,750.08 1232.05,761.35 1237.10,760.33 1242.15,758.28 1247.20,758.69 1252.25,764.02 1257.30,767.10 1262.35,772.22 1267.40,774.27 1272.45,754.18 1277.50,754.59 1282.55,747.00 1287.60,762.38 1292.65,744.54 1297.70,755.20 1302.75,752.54 1307.80,761.35 1312.85,753.15 1317.90,767.92 1322.95,761.35 1328.00,748.03 1333.05,675.85 1338.10,684.46 1343.15,692.66 1348.20,700.46 1353.25,717.27 1358.30,765.46 1363.35,751.51 1368.40,769.97 1373.45,758.69 1378.50,762.99 1383.55,756.84 1388.60,755.61 1393.65,755.61 1398.70,760.74 1403.75,746.39 1408.80,748.03 1413.85,751.51 1418.90,767.92 1423.95,764.84 1429.00,778.78 1434.05,750.08 1439.10,712.76 1444.15,732.65 1449.20,753.56 1454.25,755.61 1459.30,766.48 1464.35,753.15 1464.35,788" fill="#6ed0e0" fill-opacity="0.1"/>
<polygon points="984.60,788 984.60,754.18 989.65,756.84 994.70,752.13 999.75,757.66 1004.80,748.64 1009.85,766.48 1014.90,744.54 1019.95,721.37 1025.00,709.07 1030.05,723.42 1035.10,744.54 1040.15,753.15 1045.20,747.41 1050.25,750.69 1055.30,746.59 1060.35,738.80 1065.40,729.16 1070.45,699.23 1075.50,738.80 1080.55,732.03 1085.60,733.26 1090.65,743.31 1095.70,731.62 1100.75,727.52 1105.80,726.50 1110.85,745.36 1115.90,726.09 1120.95,741.47 1126.00,715.83 1131.05,734.70 1136.10,754.18 1141.15,731.21 1146.20,731.62 1151.25,781.86 1156.30,786.98 1161.35,766.48 1166.40,719.94 1171.45,717.88 1176.50,728.55 1181.55,715.22 1186.60,693.28 1191.65,753.15 1196.70,755.61 1201.75,759.92 1206.80,754.59 1211.85,759.71 1216.90,766.07 1221.95,751.10 1227.00,762.38 1232.05,769.56 1237.10,768.53 1242.15,766.89 1247.20,767.51 1252.25,771.20 1257.30,773.04 1262.35,777.14 1267.40,778.37 1272.45,764.43 1277.50,764.84 1282.55,759.30 1287.60,770.58 1292.65,757.66 1297.70,765.46 1302.75,763.81 1307.80,769.56 1312.85,763.81 1317.90,774.07 1322.95,770.17 1328.00,759.30 1333.05,710.09 1338.10,715.22 1343.15,720.35 1348.20,726.91 1353.25,737.77 1358.30,772.63 1363.35,762.79 1368.40,775.30 1373.45,767.51 1378.50,770.99 1383.55,766.48 1388.60,765.87 1393.65,765.46 1398.70,769.15 1403.75,759.30 1408.80,760.33 1413.85,762.99 1418.90,774.27 1423.95,771.61 1429.00,781.45 1434.05,759.30 1439.10,735.72 1444.15,749.05 1449.20,764.43 1454.25,766.07 1459.30,773.66 1464.35,764.02 1464.35,788" fill="#eab839" fill-opacity="0.1"/>
<polygon points="984.60,788 984.60,754.18 989.65,756.84 994.70,752.13 999.75,757.66 1004.80,748.64 1009.85,766.48 1014.90,744.54 1019.95,721.37 1025.00,709.07 1030.05,723.42 1035.10,744.54 1040.15,753.15 1045.20,747.41 1050.25,750.69 1055.30,746.59 1060.35,738.80 1065.40,729.16 1070.45,699.23 1075.50,738.80 1080.55,732.03 1085.60,733.26 1090.65,743.31 1095.70,731.62 1100.75,727.52 1105.80,726.50 1110.85,745.36 1115.90,726.09 1120.95,741.47 1126.00,715.83 1131.05,734.70 1136.10,754.18 1141.15,731.21 1146.20,731.62 1151.25,781.86 1156.30,786.98 1161.35,766.48 1166.40,719.94 1171.45,717.88 1176.50,728.55 1181.55,715.22 1186.60,693.28 1191.65,753.15 1196.70,755.61 1201.75,759.92 1206.80,754.59 1211.85,759.71 1216.90,766.07 1221.95,751.10 1227.00,762.38 1232.05,769.56 1237.10,768.53 1242.15,766.89 1247.20,767.51 1252.25,771.20 1257.30,773.04 1262.35,777.14 1267.40,778.37 1272.45,764.43 1277.50,764.84 1282.55,759.30 1287.60,770.58 1292.65,757.66 1297.70,765.46 1302.75,763.81 1307.80,769.56 1312.85,763.81 1317.90,774.07 1322.95,770.17 1328.00,759.30 1333.05,710.09 1338.10,715.22 1343.15,720.35 1348.20,726.91 1353.25,737.77 1358.30,772.63 1363.35,762.79 1368.40,775.30 1373.45,767.51 1378.50,770.99 1383.55,766.48 1388.60,765.87 1393.65,765.46 1398.70,769.15 1403.75,759.30 1408.80,760.33 1413.85,762.99 1418.90,774.27 1423.95,771.61 1429.00,781.45 1434.05,759.30 1439.10,735.72 1444.15,749.05 1449.20,764.43 1454.25,766.07 1459.30,773.66 1464.35,764.02 1464.35,788" fill="#7eb26d" fill-opacity="0.1"/>
<polyline points="984.60,738.80 989.65,743.31 994.70,735.72 999.75,743.52 1004.80,731.21 1009.85,757.25 1014.90,721.37 1019.95,692.66 1025.00,674.83 1030.05,694.71 1035.10,726.09 1040.15,737.77 1045.20,729.57 1050.25,734.70 1055.30,728.55 1060.35,718.30 1065.40,702.51 1070.45,661.50 1075.50,717.27 1080.55,708.04 1085.60,709.68 1090.65,723.42 1095.70,707.02 1100.75,701.48 1105.80,699.84 1110.85,726.09 1115.90,699.23 1120.95,720.96 1126.00,684.46 1131.05,709.48 1136.10,737.77 1141.15,706.61 1146.20,707.02 1151.25,777.76 1156.30,786.98 1161.35,764.43 1166.40,690.20 1171.45,687.13 1176.50,702.92 1181.55,684.46 1186.60,651.66 1191.65,738.39 1196.70,741.88 1201.75,748.03 1206.80,740.23 1211.85,747.41 1216.90,756.23 1221.95,734.70 1227.00,750.08 1232.05,761.35 1237.10,760.33 1242.15,758.28 1247.20,758.69 1252.25,764.02 1257.30,767.10 1262.35,772.22 1267.40,774.27 1272.45,754.18 1277.50,754.59 1282.55,747.00 1287.60,762.38 1292.65,744.54 1297.70,755.20 1302.75,752.54 1307.80,761.35 1312.85,753.15 1317.90,767.92 1322.95,761.35 1328.00,748.03 1333.05,675.85 1338.10,684.46 1343.15,692.66 1348.20,700.46 1353.25,717.27 1358.30,765.46 1363.35,751.51 1368.40,769.97 1373.45,758.69 1378.50,762.99 1383.55,756.84 1388.60,755.61 1393.65,755.61 1398.70,760.74 1403.75,746.39 1408.80,748.03 1413.85,751.51 1418.90,767.92 1423.95,764.84 1429.00,778.78 1434.05,750.08 1439.10,712.76 1444.15,732.65 1449.20,753.56 1454.25,755.61 1459.30,766.48 1464.35,753.15" fill="none" stroke="#ef843c" stroke-width="1.3" stroke-linejoin="round"/>
<polyline points="984.60,754.18 989.65,756.84 994.70,752.13 999.75,757.66 1004.80,748.64 1009.85,766.48 1014.90,744.54 1019.95,721.37 1025.00,709.07 1030.05,723.42 1035.10,744.54 1040.15,753.15 1045.20,747.41 1050.25,750.69 1055.30,746.59 1060.35,738.80 1065.40,729.16 1070.45,699.23 1075.50,738.80 1080.55,732.03 1085.60,733.26 1090.65,743.31 1095.70,731.62 1100.75,727.52 1105.80,726.50 1110.85,745.36 1115.90,726.09 1120.95,741.47 1126.00,715.83 1131.05,734.70 1136.10,754.18 1141.15,731.21 1146.20,731.62 1151.25,781.86 1156.30,786.98 1161.35,766.48 1166.40,719.94 1171.45,717.88 1176.50,728.55 1181.55,715.22 1186.60,693.28 1191.65,753.15 1196.70,755.61 1201.75,759.92 1206.80,754.59 1211.85,759.71 1216.90,766.07 1221.95,751.10 1227.00,762.38 1232.05,769.56 1237.10,768.53 1242.15,766.89 1247.20,767.51 1252.25,771.20 1257.30,773.04 1262.35,777.14 1267.40,778.37 1272.45,764.43 1277.50,764.84 1282.55,759.30 1287.60,770.58 1292.65,757.66 1297.70,765.46 1302.75,763.81 1307.80,769.56 1312.85,763.81 1317.90,774.07 1322.95,770.17 1328.00,759.30 1333.05,710.09 1338.10,715.22 1343.15,720.35 1348.20,726.91 1353.25,737.77 1358.30,772.63 1363.35,762.79 1368.40,775.30 1373.45,767.51 1378.50,770.99 1383.55,766.48 1388.60,765.87 1393.65,765.46 1398.70,769.15 1403.75,759.30 1408.80,760.33 1413.85,762.99 1418.90,774.27 1423.95,771.61 1429.00,781.45 1434.05,759.30 1439.10,735.72 1444.15,749.05 1449.20,764.43 1454.25,766.07 1459.30,773.66 1464.35,764.02" fill="none" stroke="#eab839" stroke-width="1.3" stroke-linejoin="round"/>
<line x1="982.6" y1="788" x2="1466.2" y2="788" stroke="#ef843c" stroke-width="2"/>
<text x="1708.6" y="644.6" font-size="12" text-anchor="end" fill="#33a2e5" font-weight="bold">max</text>
<text x="1782.4" y="644.6" font-size="12" text-anchor="end" fill="#33a2e5" font-weight="bold">avg</text>
<path d="M1787.5,638.5 L1791,642 L1794.5,638.5" fill="none" stroke="#33a2e5" stroke-width="1.3"/>
<line x1="1504.4" y1="665.2" x2="1516.2" y2="665.2" stroke="#ef843c" stroke-width="2"/>
<text x="1526.7" y="669.7" font-size="13" text-anchor="start" fill="#c7d0d9" font-weight="normal">all</text>
<text x="1708.6" y="669.7" font-size="13" text-anchor="end" fill="#c7d0d9" font-weight="normal">1.68 MiB</text>
<text x="1799.5" y="669.7" font-size="13" text-anchor="end" fill="#c7d0d9" font-weight="normal">674.30 KiB</text>
<rect x="1489.7" y="679.2" width="321" height="27" fill="#1d1f23"/>
<line x1="1504.4" y1="692.75" x2="1516.2" y2="692.75" stroke="#6ed0e0" stroke-width="2"/>
<text x="1526.7" y="697.25" font-size="13" text-anchor="start" fill="#c7d0d9" font-weight="normal">8_生成订单信息</text>
<text x="1708.6" y="697.25" font-size="13" text-anchor="end" fill="#c7d0d9" font-weight="normal">1.68 MiB</text>
<text x="1799.5" y="697.25" font-size="13" text-anchor="end" fill="#c7d0d9" font-weight="normal">674.30 KiB</text>
<line x1="1504.4" y1="720.3000000000001" x2="1516.2" y2="720.3000000000001" stroke="#eab839" stroke-width="2"/>
<text x="1526.7" y="724.8000000000001" font-size="13" text-anchor="start" fill="#c7d0d9" font-weight="normal">all</text>
<text x="1708.6" y="724.8000000000001" font-size="13" text-anchor="end" fill="#c7d0d9" font-weight="normal">1.18 MiB</text>
<text x="1799.5" y="724.8000000000001" font-size="13" text-anchor="end" fill="#c7d0d9" font-weight="normal">472.19 KiB</text>
<rect x="1489.7" y="734.4" width="321" height="27" fill="#1d1f23"/>
<line x1="1504.4" y1="747.85" x2="1516.2" y2="747.85" stroke="#7eb26d" stroke-width="2"/>
<text x="1526.7" y="752.35" font-size="13" text-anchor="start" fill="#c7d0d9" font-weight="normal">8_生成订单信息</text>
<text x="1708.6" y="752.35" font-size="13" text-anchor="end" fill="#c7d0d9" font-weight="normal">1.18 MiB</text>
<text x="1799.5" y="752.35" font-size="13" text-anchor="end" fill="#c7d0d9" font-weight="normal">472.19 KiB</text>
</svg></body></html>
